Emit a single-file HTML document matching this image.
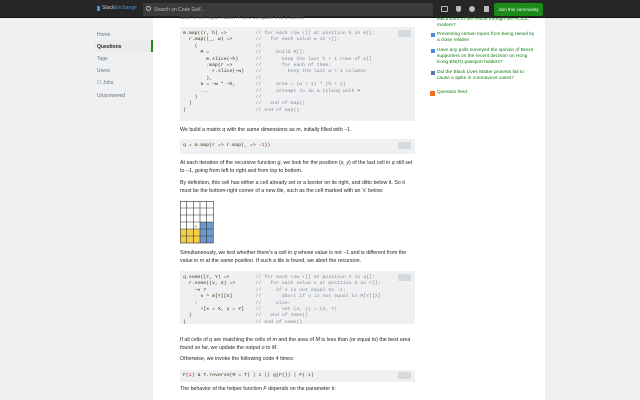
<!DOCTYPE html>
<html><head><meta charset="utf-8"><style>
*{margin:0;padding:0;box-sizing:border-box}
body{width:640px;height:400px;overflow:hidden;background:#eff0f1;font-family:"Liberation Sans",sans-serif;position:relative;color:#242729}
.top{position:absolute;left:0;top:0;width:640px;height:18px;background:#262626;border-bottom:1px solid #111}
.main{position:absolute;left:153px;top:18px;width:392px;height:382px;background:#fff}
.code{position:absolute;left:180px;width:235px;background:#eff0f1;font-family:"Liberation Mono",monospace;font-size:4.85px;line-height:6.4px;color:#393318;padding:4px 3px;white-space:pre;overflow:hidden}
.c{color:#858c93}
.copy{position:absolute;right:4px;top:3px;width:13px;height:7px;background:#d6d9dc;border-radius:1px}
.p{position:absolute;left:180px;width:233px;font-size:5.3px;line-height:8px;color:#242729}
.nav{position:absolute;left:97px;font-size:5px;color:#6a737c}
.side{position:absolute;left:437px;font-size:4.8px;line-height:6.1px;color:#0f7b0f;width:98px}
.ic{position:absolute;left:-6px;top:1px;width:4px;height:4px;background:#4c8fd6}
</style></head><body>
<div class="top">
 <div style="position:absolute;left:97px;top:6px;width:3px;height:5px;background:#4a90d9"></div>
 <div style="position:absolute;left:102px;top:5px;font-size:5px;color:#ccc">Stack<span style="color:#4a90d9">Exchange</span></div>
 <div style="position:absolute;left:143px;top:3px;width:290px;height:13px;background:#3b3b3b;border-radius:2px;font-size:5px;color:#bbb;padding:4px 0 0 11px">Search on Code Golf...</div>
 <div style="position:absolute;left:146px;top:6px;width:5px;height:5px;border:1px solid #bbb;border-radius:50%"></div>
 <div style="position:absolute;left:441px;top:6px;width:7px;height:6px;border:1px solid #bbb;border-radius:1px"></div>
 <div style="position:absolute;left:456px;top:6px;width:5px;height:6px;background:#bbb;border-radius:1px 1px 3px 3px"></div>
 <div style="position:absolute;left:469px;top:6px;width:6px;height:6px;background:#bbb;border-radius:50%"></div>
 <div style="position:absolute;left:484px;top:6px;width:5px;height:6px;background:#bbb"></div>
 <div style="position:absolute;left:494px;top:3px;width:49px;height:13px;background:#1b8c1b;border-radius:2px;font-size:4.6px;color:#fff;text-align:center;line-height:13px">Join this community</div>
</div>
<div class="main"></div>
<div class="nav" style="top:32px">Home</div>
<div style="position:absolute;left:94px;top:40px;width:59px;height:12px;background:#eaebec;border-right:2px solid #1b8c1b"></div>
<div class="nav" style="top:44px;color:#242729;font-weight:bold">Questions</div>
<div class="nav" style="top:56px">Tags</div>
<div class="nav" style="top:68px">Users</div>
<div class="nav" style="top:80px">☐ Jobs</div>
<div class="nav" style="top:93px">Unanswered</div>

<div class="p" style="top:14px;color:#555">uses of the input matrix m and compare it to a stored</div>
<div class="code" style="top:27px;height:94px">m.map((r, h) =>          <span class="c">// for each row r[] at position h in m[]:</span>
  r.map((_, w) =>        <span class="c">//   for each value w in r[]:</span>
    (                    <span class="c">//</span>
      M =                <span class="c">//     build M[]:</span>
        m.slice(~h)      <span class="c">//       keep the last h + 1 rows of m[]</span>
        .map(r =>        <span class="c">//       for each of them:</span>
          r.slice(~w)    <span class="c">//         keep the last w + 1 columns</span>
        ),               <span class="c">//</span>
      a = ~w * ~h,       <span class="c">//     area = (w + 1) * (h + 1)</span>
      ...                <span class="c">//     attempt to do a tiling with M</span>
    )                    <span class="c">//</span>
  )                      <span class="c">//   end of map()</span>
)                        <span class="c">// end of map()</span><div class="copy"></div></div>
<div class="p" style="top:126px">We build a matrix <i>q</i> with the same dimensions as <i>m</i>, initially filled with −1.</div>
<div class="code" style="top:139px;height:15px;padding-top:4px">q = m.map(r => r.map(_ => <span style="color:#c02d2e">-1</span>))<div class="copy"></div></div>
<div class="p" style="top:159px">At each iteration of the recursive function <i>g</i>, we look for the position (<i>x, y</i>) of the last cell in <i>q</i> still set to −1, going from left to right and from top to bottom.</div>
<div class="p" style="top:179px">By definition, this cell has either a cell already set or a border on its right, and ditto below it. So it must be the bottom-right corner of a new tile, such as the cell marked with an 'x' below:</div>
<svg style="position:absolute;left:180px;top:201px" width="34" height="43" viewBox="0 0 34 43">
<rect x="0" y="28" width="20" height="14" fill="#f5cf47"/>
<rect x="20" y="21" width="13.4" height="21" fill="#6e99cc"/>
<g stroke="#333" stroke-width="0.6" fill="none">
<rect x="0.3" y="0.3" width="33" height="41.7"/>
<path d="M6.7 0V42M13.4 0V42M20 0V42M26.7 0V42M0 7H33.4M0 14H33.4M0 21H33.4M0 28H33.4M0 35H33.4"/>
</g>
<text x="15" y="26.5" font-size="4" fill="#333" font-family="Liberation Sans">x</text>
</svg>
<div class="p" style="top:249px">Simultaneously, we test whether there's a cell in <i>q</i> whose value is not −1 and is different from the value in <i>m</i> at the same position. If such a tile is found, we abort the recursion.</div>
<div class="code" style="top:271px;height:53px">q.some((r, Y) =>         <span class="c">// for each row r[] at position Y in q[]:</span>
  r.some((v, X) =>       <span class="c">//   for each value v at position X in r[]:</span>
    ~v ?                 <span class="c">//     if v is not equal to -1:</span>
      v ^ m[Y][X]        <span class="c">//       abort if v is not equal to M[Y][X]</span>
    :                    <span class="c">//     else:</span>
      ![x = X, y = Y]    <span class="c">//       set (x, y) = (X, Y)</span>
  )                      <span class="c">//   end of some()</span>
)                        <span class="c">// end of some()</span><div class="copy"></div></div>
<div class="p" style="top:336px">If all cells of <i>q</i> are matching the cells of <i>m</i> and the area of <i>M</i> is less than (or equal to) the best area found so far, we update the output <i>o</i> to <i>M</i>.</div>
<div class="p" style="top:355px">Otherwise, we invoke the following code 4 times:</div>
<div class="code" style="top:370px;height:12px;padding-top:3px">F(<span style="color:#c02d2e">1</span>) &amp; T.reverse(M = T) | z || g(F()) | F(-<span style="color:#c02d2e">1</span>)<div class="copy" style="top:2px"></div></div>
<div class="p" style="top:385px">The behavior of the helper function <i>F</i> depends on the parameter <i>k</i>:</div>

<div class="side" style="top:17px">electronics in the house through the AC/DC modem?</div>
<div class="side" style="top:32px"><span class="ic"></span>Preventing certain topics from being raised by a close relative</div>
<div class="side" style="top:48px"><span class="ic"></span>Have any polls surveyed the opinion of Brexit supporters on the recent decision on Hong Kong BN(O) passport holders?</div>
<div class="side" style="top:70px"><span class="ic" style="background:#5577aa"></span>Did the Black Lives Matter protests fail to cause a spike in coronavirus cases?</div>
<div class="side" style="top:90px"><span class="ic" style="background:#f26d21;width:5px;height:5px;left:-7px"></span>Question feed</div>
</body></html>
